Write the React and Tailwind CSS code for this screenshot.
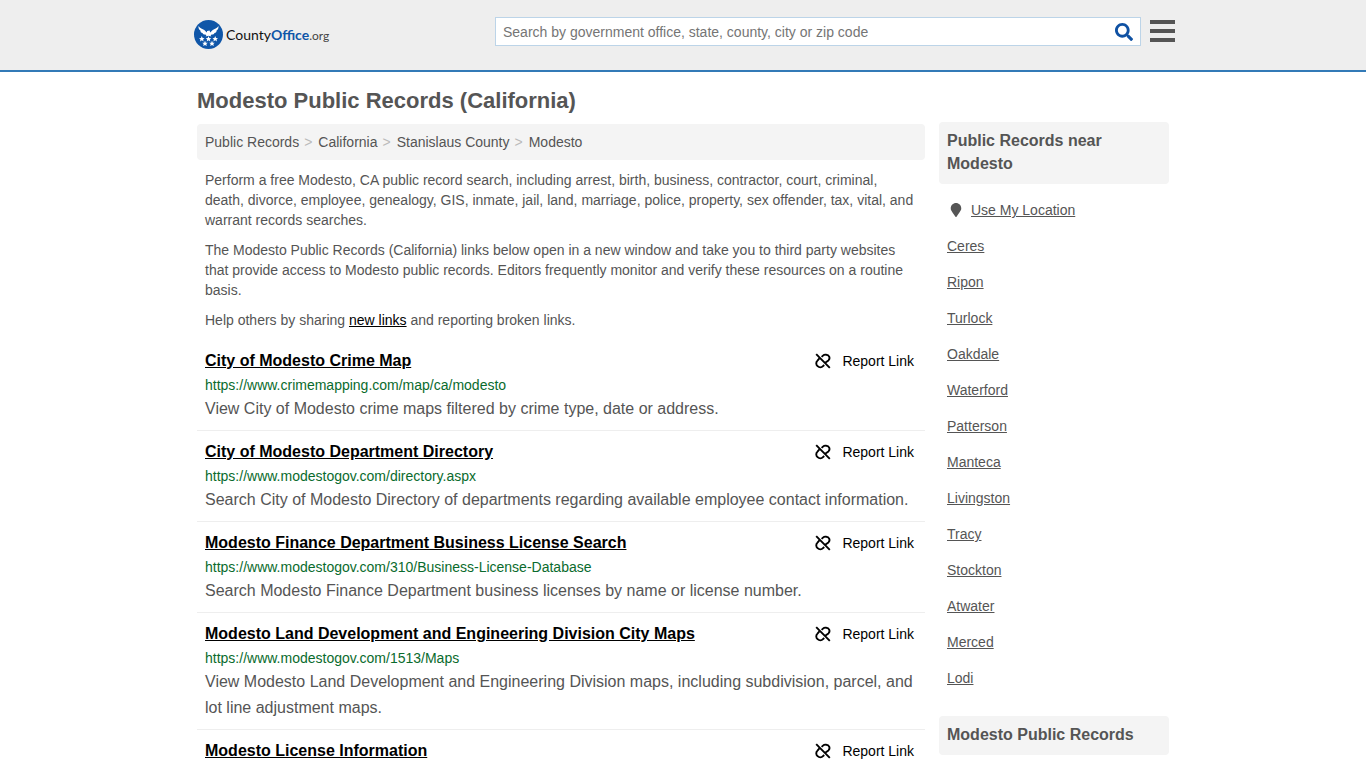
import React from "react";
import { FaMapMarker, FaSearch } from "react-icons/fa";

const crumbs = ["Public Records", "California", "Stanislaus County", "Modesto"];

const records = [
  {
    title: "City of Modesto Crime Map",
    url: "https://www.crimemapping.com/map/ca/modesto",
    text: "View City of Modesto crime maps filtered by crime type, date or address.",
  },
  {
    title: "City of Modesto Department Directory",
    url: "https://www.modestogov.com/directory.aspx",
    text: "Search City of Modesto Directory of departments regarding available employee contact information.",
  },
  {
    title: "Modesto Finance Department Business License Search",
    url: "https://www.modestogov.com/310/Business-License-Database",
    text: "Search Modesto Finance Department business licenses by name or license number.",
  },
  {
    title: "Modesto Land Development and Engineering Division City Maps",
    url: "https://www.modestogov.com/1513/Maps",
    text: "View Modesto Land Development and Engineering Division maps, including subdivision, parcel, and lot line adjustment maps.",
  },
  { title: "Modesto License Information" },
];

const cities = [
  "Ceres", "Ripon", "Turlock", "Oakdale", "Waterford", "Patterson", "Manteca",
  "Livingston", "Tracy", "Stockton", "Atwater", "Merced", "Lodi",
];

const stars = [[7.8, 19], [14.5, 19], [21.2, 19], [11, 23.6], [18, 23.6]];

function Emblem() {
  return (
    <svg viewBox="0 0 29 29" className="size-[29px] shrink-0" aria-hidden="true">
      <circle cx="14.5" cy="14.5" r="14.5" fill="#0f56a8" />
      <path
        fill="#fff"
        d="M4.5 6 C6 8.4 8.5 9.2 10.3 10 L12.8 12.6 L13.1 11 L15.6 10.4 L16.2 12.6 L18.7 10 C20.5 9.2 23 8.4 24.5 6 C24.7 8 24 9.6 22.6 10.4 C22.8 11.6 21.7 12.7 20.5 12.9 C20 14 18.8 14.6 17.6 14.4 L16.6 15.4 L17.4 16.4 L14.5 15.8 L11.6 16.4 L12.4 15.4 L11.4 14.4 C10.2 14.6 9 14 8.5 12.9 C7.3 12.7 6.2 11.6 6.4 10.4 C5 9.6 4.3 8 4.5 6 Z"
      />
      {stars.map(([x, y]) => (
        <path
          key={`${x}-${y}`}
          transform={`translate(${x} ${y}) scale(1.2)`}
          fill="#fff"
          d="M0 -2.4 L0.7 -0.8 L2.3 -0.7 L1.1 0.4 L1.5 2 L0 1.1 L-1.5 2 L-1.1 0.4 L-2.3 -0.7 L-0.7 -0.8 Z"
        />
      ))}
    </svg>
  );
}

function BrokenLinkIcon() {
  return (
    <svg viewBox="0 0 16 16" className="size-4" fill="none" stroke="currentColor" strokeWidth="1.9" aria-hidden="true">
      <path d="M1.2 1.2 L14.8 14.8" />
      <path d="M6.6 3.9 L8 2.6 A3.4 3.4 0 0 1 11 1.7 A3.3 3.3 0 0 1 13.4 7.4 L10.2 9.8" />
      <path d="M4.6 5.2 L2.5 7.6 A3.6 3.6 0 0 0 2.7 13.2 A3.6 3.6 0 0 0 8 13.2 L9.2 12" />
    </svg>
  );
}

function Header() {
  return (
    <header className="border-b-2 border-[#337ab7] bg-[#eeeeee]">
      <div className="mx-auto flex h-[70px] max-w-[978px] justify-between">
        <a href="#" className="mt-5 flex h-[29px] items-center gap-[3px] text-[14px] text-[#111111] font-[Lato,sans-serif]">
          <Emblem />
          <span className="pt-0.5">
            County<b className="text-[#0f56a8]">Office</b>
            <span className="text-[12px] text-[#444444]">.org</span>
          </span>
        </a>
        <div className="mt-[17px] flex items-start gap-[9px]">
          <form role="search" className="flex h-[29px] w-[646px] items-center border border-[#bcd4e8] bg-white">
            <input
              type="text"
              aria-label="Search"
              placeholder="Search by government office, state, county, city or zip code"
              className="h-full min-w-0 flex-1 px-[7px] text-[14px] outline-none placeholder:text-[#757575]"
            />
            <button type="button" aria-label="Submit search" className="px-[7px] text-[#0f51a3]">
              <FaSearch size={18} />
            </button>
          </form>
          <button type="button" aria-label="Menu" className="mr-[-3px] flex flex-col gap-[5px] pt-[3px]">
            <span className="h-1 w-[25px] bg-[#555555]" />
            <span className="h-1 w-[25px] bg-[#555555]" />
            <span className="h-1 w-[25px] bg-[#555555]" />
          </button>
        </div>
      </div>
    </header>
  );
}

function Record({ title, url, text }) {
  return (
    <li className="border-b border-[#eeeeee] p-2">
      <div className="flex justify-between leading-[26px]">
        <a href="#" className="text-[16px] font-bold text-black underline">{title}</a>
        <a href="#" className="mr-[3px] flex items-center gap-[11px] text-[14px] text-black">
          <BrokenLinkIcon />
          Report Link
        </a>
      </div>
      {url && <p className="text-[14px] leading-[22px] text-[#0a6b2d]">{url}</p>}
      {text && <p className="text-[16px] leading-[26px]">{text}</p>}
    </li>
  );
}

function SideHeading({ children }) {
  return (
    <h2 className="rounded-sm bg-[#f4f4f4] px-2 pt-[7px] pb-[9px] text-[16px] leading-[23px] font-bold">
      {children}
    </h2>
  );
}

export default function App() {
  return (
    <div className="bg-white font-['Liberation_Sans',Arial,sans-serif] text-[14px] leading-5 text-[#555555]">
      <Header />
      <div className="mx-auto flex max-w-[972px] gap-[14px]">
        <main className="min-w-0 flex-1">
          <h1 className="pt-[17px] pb-[11px] text-[22px] leading-6 font-bold">Modesto Public Records (California)</h1>
          <nav aria-label="Breadcrumb" className="rounded-sm bg-[#f4f4f4] p-2">
            <ol className="flex">
              {crumbs.map((crumb, i) => (
                <li key={crumb}>
                  {i > 0 && <span className="pr-[6px] pl-[5px] text-[#bbbbbb]">&gt;</span>}
                  <a href="#">{crumb}</a>
                </li>
              ))}
            </ol>
          </nav>
          <div className="space-y-[10px] px-2 py-[10px]">
            <p>
              Perform a free Modesto, CA public record search, including arrest, birth, business, contractor, court,
              criminal, death, divorce, employee, genealogy, GIS, inmate, jail, land, marriage, police, property, sex
              offender, tax, vital, and warrant records searches.
            </p>
            <p>
              The Modesto Public Records (California) links below open in a new window and take you to third party
              websites that provide access to Modesto public records. Editors frequently monitor and verify these
              resources on a routine basis.
            </p>
            <p>
              Help others by sharing <a href="#" className="text-black underline">new links</a> and reporting broken
              links.
            </p>
          </div>
          <ul>
            {records.map((record) => (
              <Record key={record.title} {...record} />
            ))}
          </ul>
        </main>
        <aside className="w-[230px] shrink-0 pt-[50px]">
          <SideHeading>Public Records near Modesto</SideHeading>
          <ul className="mt-2 mb-5 px-2">
            <li className="flex items-center gap-2 py-2 pl-[2px]">
              <FaMapMarker size={14} />
              <a href="#" className="underline">Use My Location</a>
            </li>
            {cities.map((city) => (
              <li key={city} className="py-2">
                <a href="#" className="underline">{city}</a>
              </li>
            ))}
          </ul>
          <SideHeading>Modesto Public Records</SideHeading>
        </aside>
      </div>
    </div>
  );
}
